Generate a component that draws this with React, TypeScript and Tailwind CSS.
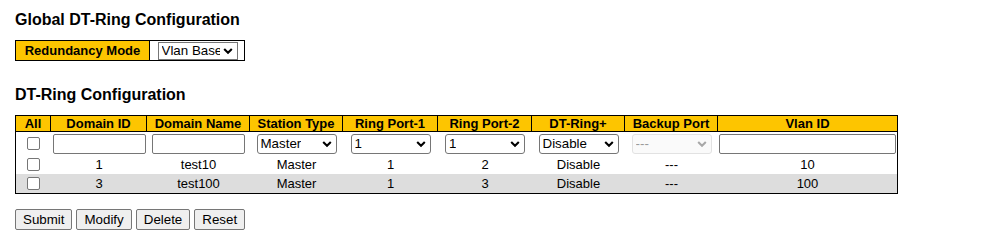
import React from "react";

const Y = "bg-[#fdc500]";

function Chevron({ color = "#000" }: { color?: string }) {
  return (
    <svg
      width="10"
      height="7"
      viewBox="0 0 10 7"
      className="absolute right-[4px] top-1/2 -translate-y-1/2"
    >
      <path d="M1.2 1.5 L5 5.2 L8.8 1.5" fill="none" stroke={color} strokeWidth="2.1" />
    </svg>
  );
}

function Select({
  value,
  w = "w-[80px]",
  h = "h-[20px]",
  disabled = false,
  square = false,
}: {
  value: string;
  w?: string;
  h?: string;
  disabled?: boolean;
  square?: boolean;
}) {
  return (
    <div
      className={`relative ${w} ${h} flex items-center overflow-hidden border ${
        disabled ? "border-[#e2e2e2] bg-[#fafafa] text-[#9a9a9a]" : "border-[#767676] bg-white text-black"
      } ${square ? "rounded-none" : "rounded-[3px]"} pl-[3px] pr-[17px] text-[13.33px] leading-[15px] whitespace-nowrap`}
    >
      <span className="block overflow-hidden">{value}</span>
      <Chevron color={disabled ? "#a8a8a8" : "#000"} />
    </div>
  );
}

function Input({ w }: { w: string }) {
  return <div className={`${w} h-[20px] border border-[#767676] rounded-[2px] bg-white`} />;
}

function Check() {
  return <div className="w-[13px] h-[13px] border border-[#767676] rounded-[2px] bg-white" />;
}

const cols = "grid grid-cols-[35px_96px_103px_93px_95px_94px_93px_93px_179px]";
const headers = [
  "All",
  "Domain ID",
  "Domain Name",
  "Station Type",
  "Ring Port-1",
  "Ring Port-2",
  "DT-Ring+",
  "Backup Port",
  "Vlan ID",
];

const rows = [
  { id: "1", name: "test10", st: "Master", p1: "1", p2: "2", dt: "Disable", bk: "---", vlan: "10", gray: false },
  { id: "3", name: "test100", st: "Master", p1: "1", p2: "3", dt: "Disable", bk: "---", vlan: "100", gray: true },
];

function Cell({ children }: { children?: React.ReactNode }) {
  return <div className="flex items-center justify-center">{children}</div>;
}

export default function App() {
  return (
    <div
      className="w-[990px] h-[239px] bg-white text-black px-[15px] pt-[11px]"
      style={{ fontFamily: '"Liberation Sans", Arial, sans-serif' }}
    >
      <h1 className="text-[16px] leading-[18px] font-bold">Global DT-Ring Configuration</h1>

      <div className="mt-[11px] flex w-[230px] h-[21px] border border-black">
        <div className={`w-[134px] ${Y} border-r border-black flex items-center justify-center text-[13px] font-bold`}>
          Redundancy Mode
        </div>
        <div className="w-[94px] flex items-center justify-center pl-[1px]">
          <Select value="Vlan Base" h="h-[18px]" square />
        </div>
      </div>

      <h2 className="mt-[25px] text-[16px] leading-[18px] font-bold">DT-Ring Configuration</h2>

      <div className="mt-[11px] w-[883px] border border-black text-[13px] leading-[15px]">
        <div className={`${cols} ${Y} font-bold border-b border-black h-[16px]`}>
          {headers.map((h, i) => (
            <div
              key={h}
              className={`flex items-center justify-center whitespace-nowrap ${
                i < headers.length - 1 ? "border-r border-black" : ""
              }`}
            >
              {h}
            </div>
          ))}
        </div>
        <div className={`${cols} h-[23px]`}>
          <Cell>
            <Check />
          </Cell>
          <Cell>
            <Input w="w-[93px]" />
          </Cell>
          <Cell>
            <Input w="w-[93px]" />
          </Cell>
          <Cell>
            <Select value="Master" />
          </Cell>
          <Cell>
            <Select value="1" />
          </Cell>
          <Cell>
            <Select value="1" />
          </Cell>
          <Cell>
            <Select value="Disable" />
          </Cell>
          <Cell>
            <Select value="---" disabled />
          </Cell>
          <Cell>
            <Input w="w-[177px]" />
          </Cell>
        </div>
        {rows.map((r) => (
          <div key={r.id} className={`${cols} h-[19px] ${r.gray ? "bg-[#dddddd]" : ""}`}>
            <Cell>
              <Check />
            </Cell>
            <Cell>{r.id}</Cell>
            <Cell>{r.name}</Cell>
            <Cell>{r.st}</Cell>
            <Cell>{r.p1}</Cell>
            <Cell>{r.p2}</Cell>
            <Cell>{r.dt}</Cell>
            <Cell>{r.bk}</Cell>
            <Cell>{r.vlan}</Cell>
          </div>
        ))}
      </div>

      <div className="mt-[15px] flex gap-[4px]">
        {["Submit", "Modify", "Delete", "Reset"].map((b) => (
          <button
            key={b}
            className="h-[21px] px-[7px] border border-[#767676] rounded-[2px] bg-[#efefef] text-[13.33px] leading-[15px] text-black"
          >
            {b}
          </button>
        ))}
      </div>
    </div>
  );
}
